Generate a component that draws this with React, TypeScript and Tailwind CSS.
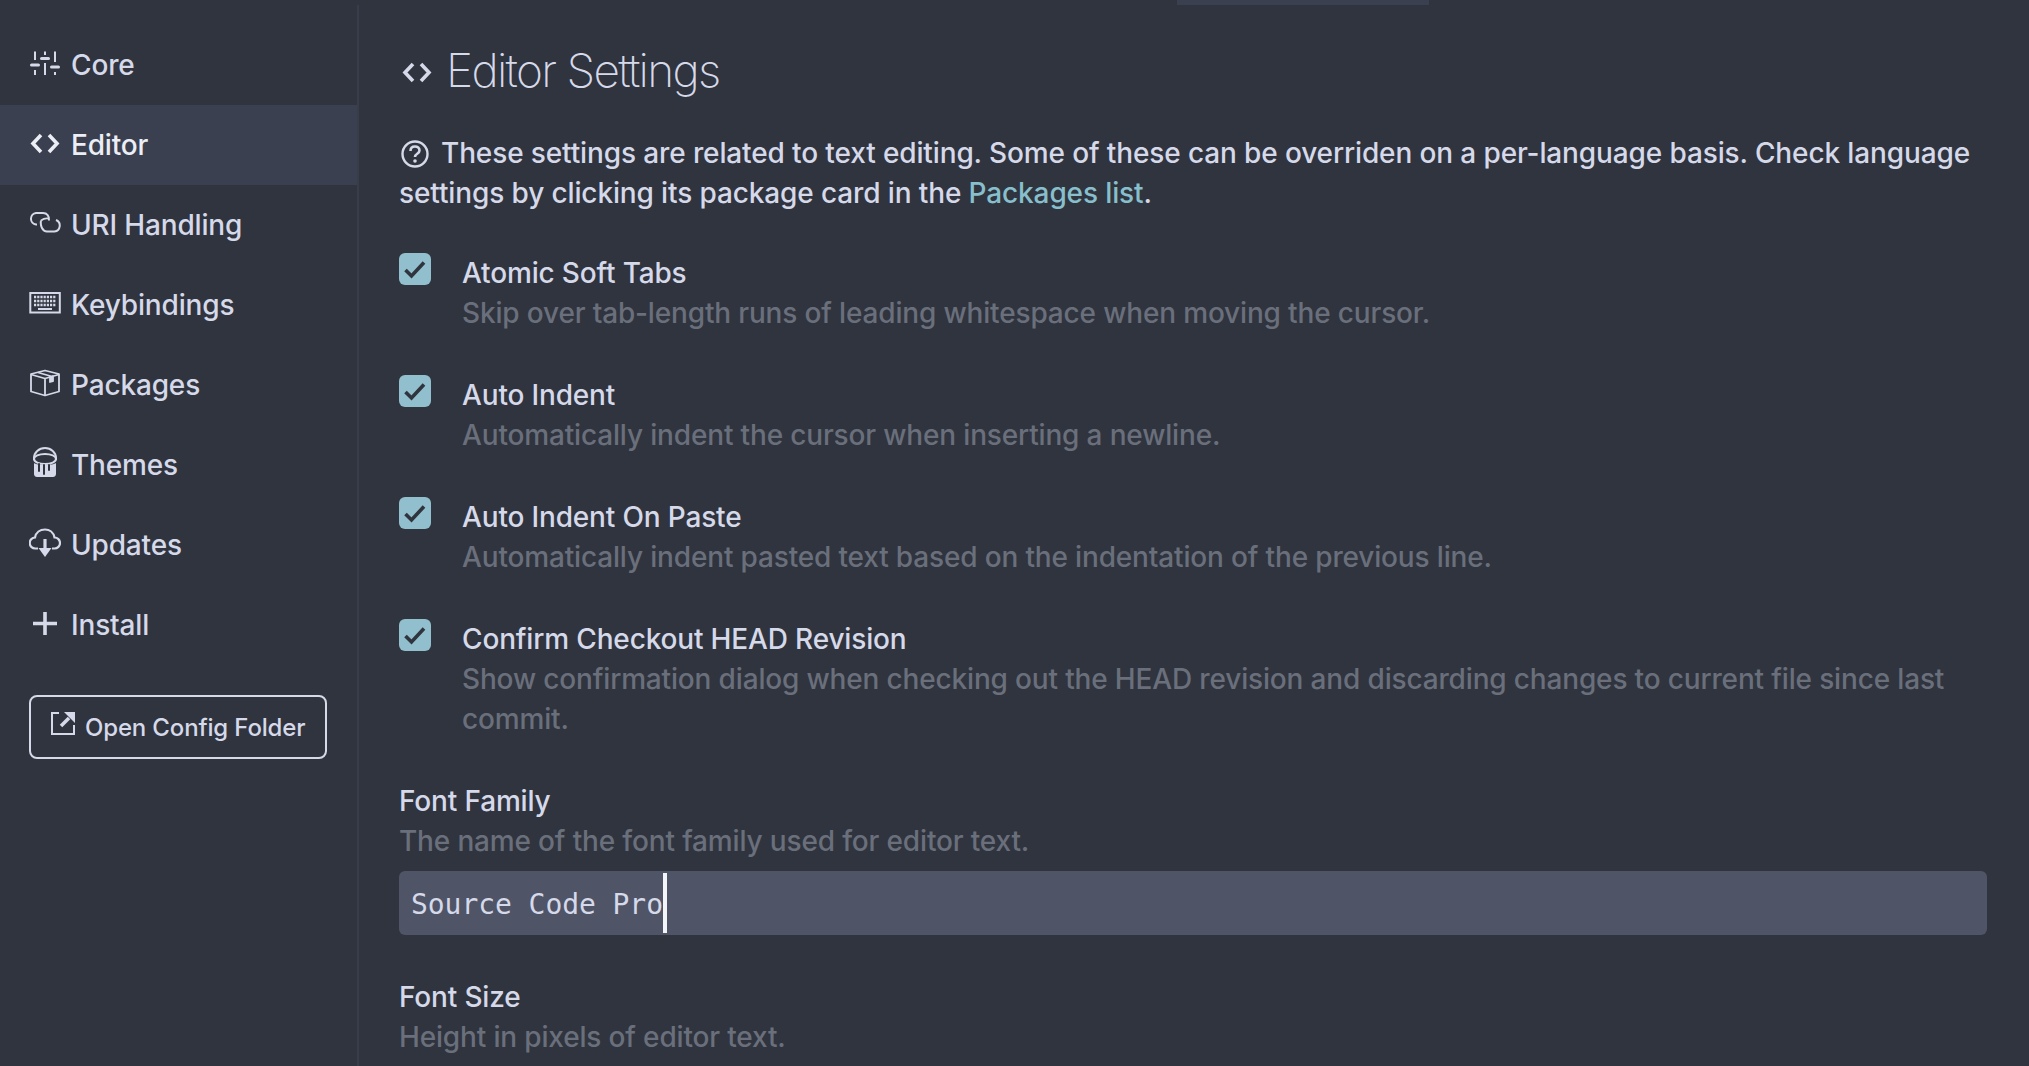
const checks = [
  { label: 'Atomic Soft Tabs', desc: 'Skip over tab-length runs of leading whitespace when moving the cursor.' },
  { label: 'Auto Indent', desc: 'Automatically indent the cursor when inserting a newline.' },
  { label: 'Auto Indent On Paste', desc: 'Automatically indent pasted text based on the indentation of the previous line.' },
  {
    label: 'Confirm Checkout HEAD Revision',
    desc: 'Show confirmation dialog when checking out the HEAD revision and discarding changes to current file since last commit.',
  },
];

function CoreIcon() {
  return (
    <svg viewBox="0 0 32 32" className="h-8 w-8 shrink-0" fill="none" stroke="currentColor" strokeWidth="2">
      <path d="M6 4.500V13M6 23v5M16 4.500V8M16 16v12M26 4.500V15M26 25v3" />
      <path d="M2.500 18h7M12.500 11.500h7M22.500 20h7" strokeWidth="3" strokeLinecap="round" />
    </svg>
  );
}

function CodeIcon() {
  return (
    <svg viewBox="0 0 32 32" className="h-8 w-8 shrink-0" fill="none" stroke="currentColor" strokeWidth="3.600">
      <path d="M12 8l-8 8.500 8 8.500M20 8l8 8.500-8 8.500" />
    </svg>
  );
}

function LinkIcon() {
  return (
    <svg viewBox="0 0 32 32" className="h-8 w-8 shrink-0" fill="none" stroke="currentColor" strokeWidth="2">
      <path d="M8 17.500H7a5.800 5.800 0 0 1 0-11.500h7c4 0 6.500 3 6 7.500" />
      <path d="M12 13.500c-1 5.500 1.500 11 6 11h7.500a6 6 0 0 0 1.500-11.500" />
      <path d="M12 13.500c2-1.500 5-2.500 7.500-2" strokeWidth="1.800" />
    </svg>
  );
}

function KeyboardIcon() {
  return (
    <svg viewBox="0 0 32 32" className="h-8 w-8 shrink-0" fill="none" stroke="currentColor" strokeWidth="2">
      <rect x="1.300" y="6" width="29.500" height="19.500" />
      <path d="M5 10h22M5 14h22M5 18h22" strokeWidth="2.500" strokeDasharray="2.200 1" />
      <path d="M9 22h14" strokeWidth="2" />
    </svg>
  );
}

function PackageIcon() {
  return (
    <svg viewBox="0 0 32 32" className="h-8 w-8 shrink-0" fill="none" stroke="currentColor" strokeWidth="1.800" strokeLinejoin="round">
      <path d="M16 3.500l14 3.500v17.500l-14 4-14-4V7z" />
      <path d="M2 7.500l14 4 14-4M16 11.500v17M9 5.500l14 4" />
      <path d="M21 9v6l3-.8V8.500" fill="currentColor" />
    </svg>
  );
}

function PaintcanIcon() {
  return (
    <svg viewBox="0 0 32 32" className="h-8 w-8 shrink-0" fill="none" stroke="currentColor" strokeWidth="2">
      <path d="M5 13V11a11 10 0 0 1 22 0v2" />
      <ellipse cx="16" cy="12" rx="11" ry="5" />
      <path
        d="M5 16c3 2.500 19 2.500 22 0v11c0 2-1.500 3-3 3H8c-1.500 0-3-1-3-3z"
        fill="currentColor"
        stroke="none"
      />
      <path d="M10 17v7M15 18v9M20 18v5" stroke="#30343e" strokeWidth="2" strokeLinecap="round" />
    </svg>
  );
}

function CloudIcon() {
  return (
    <svg viewBox="0 0 32 32" className="h-8 w-8 shrink-0" fill="none" stroke="currentColor" strokeWidth="2.200">
      <path d="M9 21.500H6.500a5.500 5.500 0 0 1-.5-11c1-5 5-8 10-8 4.500 0 8.500 3 9.500 8a5.500 5.500 0 0 1 0 11H23" />
      <path d="M16 12v10" strokeWidth="3.200" />
      <path d="M9.500 21h13L16 30z" fill="currentColor" stroke="none" />
    </svg>
  );
}

function PlusIcon() {
  return (
    <svg viewBox="0 0 32 32" className="h-8 w-8 shrink-0" fill="none" stroke="currentColor" strokeWidth="3.600">
      <path d="M16 5v23M4 16.500h24" />
    </svg>
  );
}

function ExternalIcon() {
  return (
    <svg viewBox="0 0 24 24" className="h-6 w-6 shrink-0" fill="none" stroke="currentColor" strokeWidth="2">
      <path d="M8 1H1v21h22v-9" />
      <path d="M10 14l8-8" strokeWidth="3.600" />
      <path d="M13 0h11v11z" fill="currentColor" stroke="none" />
    </svg>
  );
}

function HelpIcon() {
  return (
    <svg viewBox="0 0 28 28" className="inline-block h-7 w-7 shrink-0 align-[-5px]" fill="none" stroke="currentColor" strokeWidth="2.400">
      <circle cx="14" cy="14" r="12.500" />
      <path d="M9.500 11c0-3 2-4.500 4.500-4.500s4.500 1.500 4.500 4c0 3.500-4.500 3-4.500 6.500" strokeWidth="2.600" />
      <circle cx="14" cy="21" r="1.800" fill="currentColor" stroke="none" />
    </svg>
  );
}

const navItems = [
  { name: 'Core', icon: <CoreIcon /> },
  { name: 'Editor', icon: <CodeIcon />, active: true },
  { name: 'URI Handling', icon: <LinkIcon /> },
  { name: 'Keybindings', icon: <KeyboardIcon /> },
  { name: 'Packages', icon: <PackageIcon /> },
  { name: 'Themes', icon: <PaintcanIcon /> },
  { name: 'Updates', icon: <CloudIcon /> },
  { name: 'Install', icon: <PlusIcon /> },
];

export default function App() {
  return (
    <div className="flex h-[1066px] flex-col overflow-hidden bg-[#30343e] font-['Inter',sans-serif] text-[28px] leading-[40px] font-[450] tracking-[-0.16px] text-[#d5d9e9]">
      {/* tab bar remnant */}
      <div className="h-[5px] shrink-0 pl-[1177px]">
        <div className="h-full w-[252px] bg-[#3b4050]" />
      </div>

      <div className="flex min-h-0 flex-1">
        {/* Sidebar */}
        <aside className="w-[359px] shrink-0 border-r-2 border-[#393d4b] pt-5">
          <nav className="flex flex-col">
            {navItems.map((item) => (
              <div
                key={item.name}
                className={
                  item.active
                    ? 'flex h-20 items-center gap-[10px] bg-[#3b4050] pl-[29px] text-[#eceef5]'
                    : 'flex h-20 items-center gap-[10px] pl-[29px]'
                }
              >
                <span className="mb-1 flex">{item.icon}</span>
                <span>{item.name}</span>
              </div>
            ))}
          </nav>
          <button className="mt-[30px] ml-[29px] flex h-16 w-[298px] items-center gap-[10px] rounded-lg border-2 border-[#d5d9e9] pl-5 text-[24px]">
            <span className="mb-[6px] flex">
              <ExternalIcon />
            </span>
            <span className="mt-[2px]">Open Config Folder</span>
          </button>
        </aside>

        {/* Content */}
        <main className="min-w-0 flex-1 pt-[35px] pr-[42px] pl-[40px]">
          <h1 className="flex h-[60px] items-center gap-[17px] pl-[2px] text-[46px] font-extralight tracking-[-1.700px]">
            <span className="mt-1 flex h-[28px] w-[28px] items-center text-[#d5d9e9]">
              <CodeIcon />
            </span>
            Editor Settings
          </h1>

          <p className="mt-[33px] pr-[16px] tracking-[-0.125px]">
            <span className="mr-[12px] ml-[2px]">
              <HelpIcon />
            </span>
            These settings are related to text editing. Some of these can be overriden on a per-language basis. Check language
            settings by clicking its package card in the <span className="text-[#88bfcc]">Packages list</span>.
          </p>

          <div className="mt-10 flex flex-col gap-[42px]">
            {checks.map((c) => (
              <div key={c.label} className="flex gap-[31px]">
                <div className="flex h-8 w-8 shrink-0 items-center justify-center rounded-md bg-[#92bfcd]">
                  <svg viewBox="0 0 24 24" className="h-6 w-6" fill="none" stroke="#30343e" strokeWidth="3.600">
                    <path d="M2.500 13l6 6L21 5.500" />
                  </svg>
                </div>
                <div className="min-w-0 flex-1 pr-[16px]">
                  <div>{c.label}</div>
                  <div className="text-[#6a6f7c]">{c.desc}</div>
                </div>
              </div>
            ))}
          </div>

          <div className="mt-[42px]">
            <div>Font Family</div>
            <div className="text-[#6a6f7c]">The name of the font family used for editor text.</div>
            <div className="mt-[10px] flex h-16 items-center rounded-md bg-[#4f5467] pl-[12px] font-['DejaVu_Sans_Mono',monospace] font-normal tracking-[-0.06px]">
              <span className="mt-[3px]">Source Code Pro</span>
              <span className="h-[60px] w-1 bg-[#f4f5f9]" />
            </div>
          </div>

          <div className="mt-[42px]">
            <div>Font Size</div>
            <div className="text-[#6a6f7c]">Height in pixels of editor text.</div>
          </div>
        </main>
      </div>
    </div>
  );
}
